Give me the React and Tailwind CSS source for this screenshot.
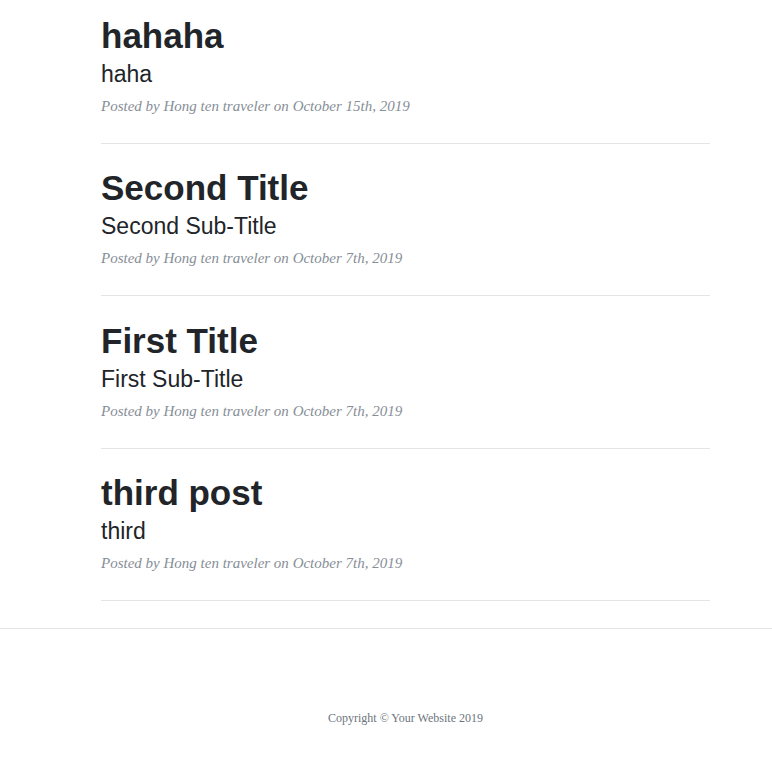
import React from 'react';

const posts = [
  { title: 'hahaha', subtitle: 'haha', date: 'October 15th, 2019' },
  { title: 'Second Title', subtitle: 'Second Sub-Title', date: 'October 7th, 2019' },
  { title: 'First Title', subtitle: 'First Sub-Title', date: 'October 7th, 2019' },
  { title: 'third post', subtitle: 'third', date: 'October 7th, 2019' },
];

export default function App() {
  return (
    <div className="min-h-[774px] bg-white">
      {/* Post list */}
      <div className="ml-[101px] w-[609px] pt-[16px]">
        {posts.map((post, index) => (
          <div key={index}>
            <a href="#" className="block text-[#212529]">
              <h2 className="text-[35px] leading-[40px] font-extrabold font-['Liberation_Sans',Arial,sans-serif]">
                {post.title}
              </h2>
              <h3 className="mt-1 text-[23px] leading-[28px] font-normal font-['Liberation_Sans',Arial,sans-serif]">
                {post.subtitle}
              </h3>
            </a>
            <p className="mt-[8px] text-[15px] leading-[20px] italic text-[#868e96] font-['Liberation_Serif','Times_New_Roman',serif]">
              Posted by Hong ten traveler on {post.date}
            </p>
            <hr className="mt-[27px] mb-[24.3px] border-0 border-t border-[#e5e5e5]" />
          </div>
        ))}
      </div>

      {/* Footer */}
      <footer className="-mt-[24.3px] pt-[27px]">
        <hr className="border-0 border-t border-[#e5e5e5]" />
        <div className="ml-[101px] w-[609px] pt-[80px] text-center">
          <p className="text-[12px] leading-[18px] text-[#6c757d] font-['Liberation_Serif','Times_New_Roman',serif]">
            Copyright © Your Website 2019
          </p>
        </div>
      </footer>
    </div>
  );
}
